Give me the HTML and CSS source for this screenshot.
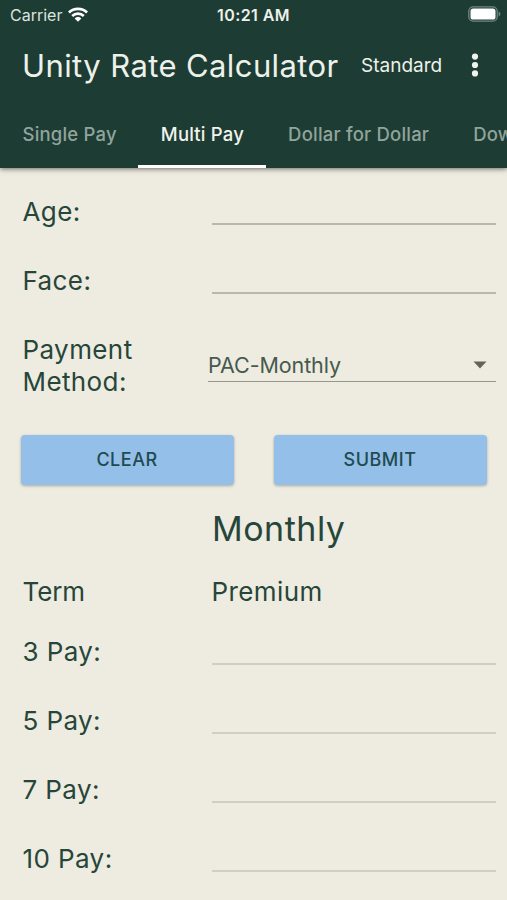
FILE: index.html
```html
<!DOCTYPE html>
<html lang="en">
<head>
<meta charset="utf-8">
<title>Unity Rate Calculator</title>
<link rel="stylesheet" href="styles.css">
</head>
<body>
<header class="header">
  <div class="status">
    <div class="carrier"><span>Carrier</span>
      <svg class="wifi" viewBox="0 0 20 15" width="20" height="15"><g fill="none" stroke="#fff" stroke-width="2.7"><path d="M.9 5.5a13 13 0 0 1 18.2 0"/><path d="M4.2 9a8.4 8.4 0 0 1 11.6 0"/></g><path fill="#fff" d="M6.6 11.4a5 5 0 0 1 6.8 0L10 14.8z"/></svg>
    </div>
    <div class="clock">10:21 AM</div>
    <svg class="battery" viewBox="0 0 33 16" width="33" height="16"><rect x=".8" y=".8" width="28.4" height="14.4" rx="4.4" fill="none" stroke="#71877f" stroke-width="1.3"/><rect x="2.5" y="2.5" width="25" height="11" rx="2.6" fill="#fff"/><path d="M30.6 5.6q1.8.7 1.8 2.4t-1.8 2.4z" fill="#71877f"/></svg>
  </div>
  <div class="titlebar">
    <h1 class="title">Unity Rate Calculator</h1>
    <span class="mode">Standard</span>
    <svg class="more" viewBox="0 0 8 24" width="8" height="24" fill="#eef3ec"><circle cx="4" cy="3.6" r="3.1"/><circle cx="4" cy="12" r="3.1"/><circle cx="4" cy="20.4" r="3.1"/></svg>
  </div>
  <nav class="tabs">
    <div class="tab">Single Pay</div>
    <div class="tab active">Multi Pay</div>
    <div class="tab">Dollar for Dollar</div>
    <div class="tab">Down</div>
  </nav>
</header>
<main class="content">
  <div class="row"><span class="label">Age:</span><span class="field"></span></div>
  <div class="row"><span class="label">Face:</span><span class="field"></span></div>
  <div class="row method"><span class="label">Payment Method:</span>
    <div class="select"><span>PAC-Monthly</span><svg viewBox="0 0 14 8" width="14" height="8"><path d="M.5.5h13L7 7.5z" fill="#62645b"/></svg></div>
  </div>
  <div class="buttons"><button class="button">CLEAR</button><button class="button">SUBMIT</button></div>
  <h2 class="heading">Monthly</h2>
  <div class="row columns"><span class="label term">Term</span><span class="label">Premium</span></div>
  <div class="row result"><span class="label">3 Pay:</span><span class="field"></span></div>
  <div class="row result"><span class="label">5 Pay:</span><span class="field"></span></div>
  <div class="row result"><span class="label">7 Pay:</span><span class="field"></span></div>
  <div class="row result"><span class="label">10 Pay:</span><span class="field"></span></div>
</main>
</body>
</html>
```
FILE: styles.css
```css
* { box-sizing: border-box; }
body {
  margin: 0;
  height: 900px;
  overflow: hidden;
  background: #eeebe0;
  color: #26463a;
  font-family: Inter, sans-serif;
}
.header {
  position: relative;
  height: 168px;
  background: #1d3c34;
  color: #eef1e9;
  box-shadow: 0 1px 5px rgba(0, 0, 0, .55);
}
.status {
  height: 30px;
  padding: 0 6px 0 10px;
  display: grid;
  grid-template-columns: 1fr auto 1fr;
  align-items: center;
  font-size: 16px;
}
.carrier { display: flex; align-items: center; gap: 6px; margin-top: -1px; color: #dbe4dd; }
.wifi { margin-top: -1px; }
.clock { margin: -1px 4px 0 0; font-weight: 600; font-size: 16px; letter-spacing: .4px; }
.battery { justify-self: end; margin-top: -2px; }
.titlebar {
  height: 70px;
  padding: 0 28px 0 22px;
  display: flex;
  align-items: center;
}
.title { margin: 0; width: 339px; font-size: 31px; font-weight: 400; letter-spacing: .4px; white-space: nowrap; }
.mode { width: 110px; font-size: 19px; }
.more { flex: none; }
.tabs { height: 68px; display: flex; overflow: hidden; }
.tab {
  flex: none;
  padding: 3px 21.5px 0 22.5px;
  border-bottom: 3px solid transparent;
  display: flex;
  align-items: center;
  font-size: 18.5px;
  font-weight: 500;
  line-height: 20px;
  letter-spacing: .2px;
  white-space: nowrap;
  color: #91a49b;
}
.active { color: #f0f3eb; border-color: #fff; }
.content { padding-top: 9px; }
.row {
  height: 69px;
  padding: 0 11px 0 23px;
  display: grid;
  grid-template-columns: 189px 1fr;
  align-items: center;
}
.label { font-size: 26px; line-height: 32px; letter-spacing: .4px; margin-left: -.5px; }
.term { letter-spacing: -.1px; }
.field { height: 2px; background: #bbb8aa; margin-top: 25px; }
.result .field { background: #d1cec2; height: 1.5px; }
.method { height: 101px; grid-template-columns: 185px 1fr; }
.method .label { width: 140px; }
.select {
  height: 34px;
  margin-top: -1px;
  border-bottom: 1.5px solid #98978b;
  padding: 1px 9px 0 0;
  display: flex;
  align-items: center;
  justify-content: space-between;
  font-size: 21.5px;
  letter-spacing: -.1px;
  color: #465a4f;
}
.buttons { padding: 19px 20px 0 21px; display: flex; gap: 40px; }
.button {
  flex: 1;
  height: 50px;
  border: 0;
  border-radius: 4px;
  background: #94bfe8;
  color: #204b50;
  box-shadow: 0 1px 3px rgba(0, 0, 0, .28);
  padding: 0 1px 0 0;
  font: 500 18px/48px Inter, sans-serif;
  letter-spacing: .5px;
}
.heading {
  margin: 0 0 0 212px;
  height: 86px;
  font-size: 34px;
  line-height: 87px;
  font-weight: 400;
  letter-spacing: .5px;
}
.columns { height: 46px; padding-bottom: 4px; }
```
